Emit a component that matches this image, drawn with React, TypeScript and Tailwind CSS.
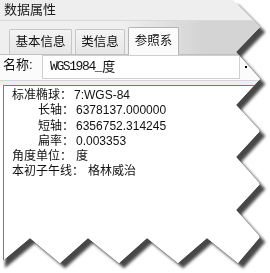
import React from 'react';

const font = { fontFamily: '"Liberation Sans", "Noto Sans CJK SC", sans-serif' };

const Tab = ({ label, width, active }: { label: string; width: string; active?: boolean }) => (
  <div
    className={
      active
        ? `${width} h-[28px] -mb-px flex items-center justify-center border border-b-0 border-[#b4b4b4] rounded-t-[2px] bg-[#fbfbfb] text-[12.5px] text-[#111]`
        : `${width} h-[25px] flex items-center justify-center border border-b-0 border-[#c6c6c6] rounded-t-[2px] bg-gradient-to-b from-[#f4f4f4] to-[#e6e6e6] text-[12.5px] text-[#111]`
    }
  >
    {label}
  </div>
);

const Line = ({ label, value, indent, gap }: { label: string; value: string; indent?: boolean; gap: string }) => (
  <div className={`flex whitespace-nowrap ${indent ? 'pl-[26px]' : ''}`}>
    <span>{label}</span>
    <span className={gap}>{value}</span>
  </div>
);

export default function App() {
  return (
    <div className="w-[270px] h-[273px] bg-white overflow-hidden" style={font}>
      <div className="w-full h-full [filter:drop-shadow(5px_5px_1.5px_rgba(0,0,0,0.72))]">
        <div className="w-full h-full flex flex-col bg-white [clip-path:polygon(0_0,233px_0,260px_27px,236px_52px,260px_79px,236px_105px,260px_131px,236px_157px,260px_184px,236px_210px,260px_237px,238px_263px,207px_238px,178px_263px,147px_238px,119px_263px,88px_238px,60px_263px,30px_238px,0_263px)]">
          {/* title */}
          <div className="h-[21px] shrink-0 flex items-center pl-[4px] bg-[#eeeeef] border-b border-[#dadada] text-[13px] text-[#1a1a1a]">
            <span>数据属性</span>
            <span className="ml-[191px] mt-[6px] w-[2px] h-[2px] bg-black" />
          </div>

          {/* tab strip */}
          <div className="h-[34px] shrink-0 flex items-end gap-[3px] pl-[9px] border-b border-[#c0c0c0] bg-gradient-to-r from-[#efefef] from-45% to-[#d4d4d4] to-75%">
            <Tab label="基本信息" width="w-[63px]" />
            <Tab label="类信息" width="w-[50px]" />
            <Tab label="参照系" width="w-[51px]" active />
          </div>

          {/* name row */}
          <div className="h-[25px] shrink-0 flex items-start bg-[#fbfbfb]">
            <span className="pl-[3px] text-[13px] text-[#111] w-[42px]">名称:</span>
            <div className="w-[198px] h-[24px] flex items-center pl-[7px] border border-[#cfcfcf] bg-white text-[13px] text-[#111]">
              <span className="tracking-[-1.4px]" style={{ fontFamily: '"Liberation Mono", monospace' }}>
                WGS1984_
              </span>
              <span className="ml-[1px]">度</span>
            </div>
            <div className="flex gap-[3px] ml-[5px] mt-[11px]">
              <span className="w-[2px] h-[2px] bg-black" />
              <span className="w-[2px] h-[2px] bg-black" />
            </div>
          </div>

          <div className="h-[5px] shrink-0 bg-[#efefef] border-t border-[#d6d6d6]" />

          {/* content box */}
          <div className="flex-1 ml-[3px] w-[257px] border border-[#149ad9] bg-white pl-[8px] pt-[2px] text-[12px] leading-[15.3px] text-[#111]">
            <Line label="标准椭球：" value="7:WGS-84" gap="ml-[2px]" />
            <Line label="长轴：" value="6378137.000000" indent gap="ml-[2px]" />
            <Line label="短轴：" value="6356752.314245" indent gap="ml-[2px]" />
            <Line label="扁率：" value="0.003353" indent gap="ml-[2px]" />
            <Line label="角度单位：" value="度" gap="ml-[4px]" />
            <Line label="本初子午线：" value="格林威治" gap="ml-[4px]" />
          </div>
        </div>
      </div>
    </div>
  );
}
